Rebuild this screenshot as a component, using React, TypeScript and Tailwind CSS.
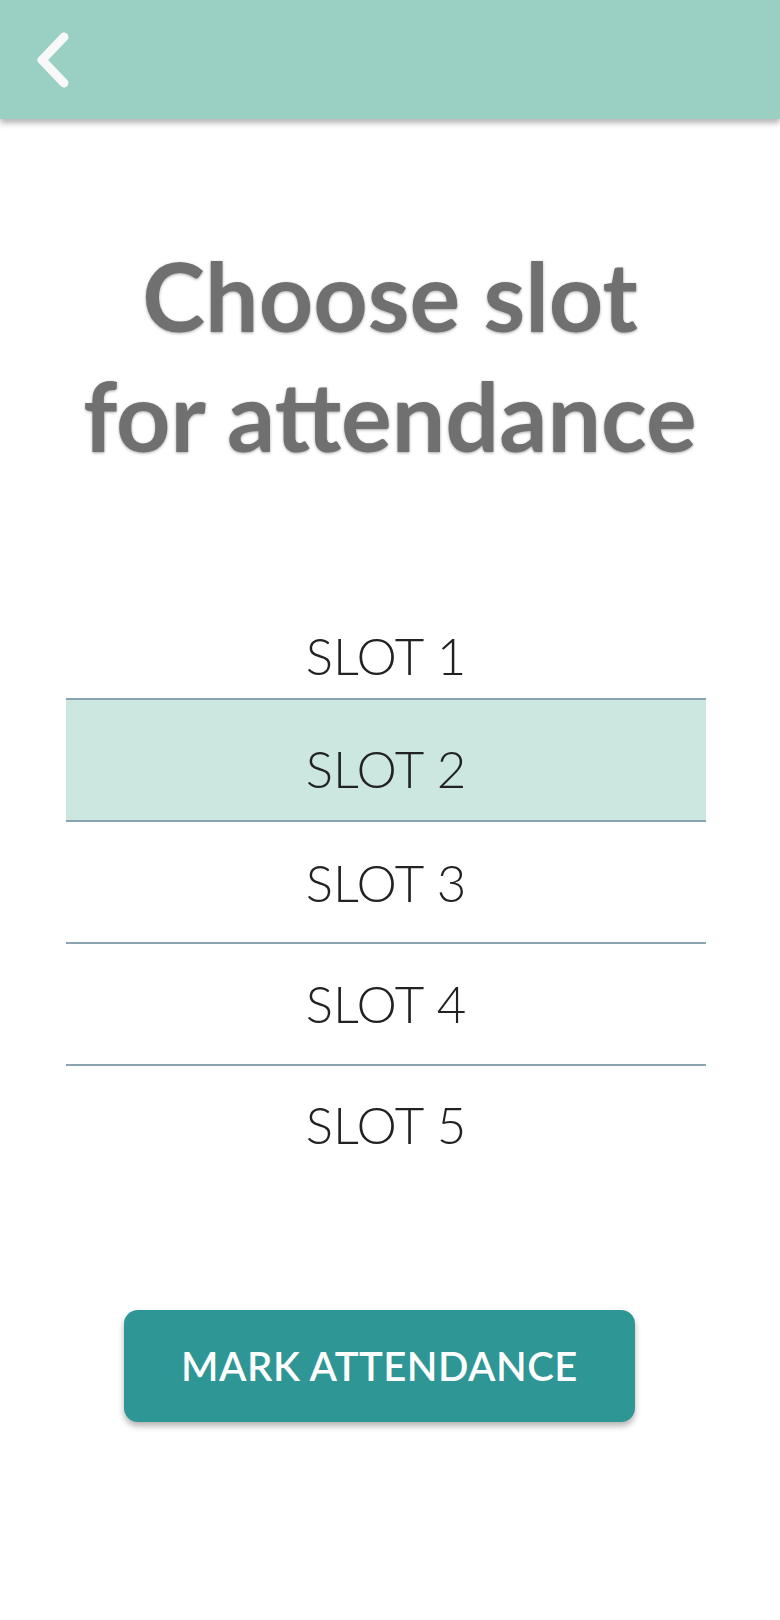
import React from "react";

const slots = [
  { label: "SLOT 1", pad: "pt-[36px]" },
  { label: "SLOT 2", pad: "pt-[19px]" },
  { label: "SLOT 3", pad: "pt-[2px]" },
  { label: "SLOT 4", pad: "pt-0" },
  { label: "SLOT 5", pad: "pb-[4px]" },
];

export default function App() {
  const selected = 1;
  return (
    <div className="w-[780px] min-h-[1620px] bg-white" style={{ fontFamily: "Lato, 'Noto Sans', sans-serif" }}>
      <header className="h-[119px] bg-[#9ad0c3] shadow-[0_4px_6px_rgba(0,0,0,0.3)] flex items-start pt-[30px] pl-[30px]">
        <svg width="44" height="60" viewBox="0 0 44 60">
          <path d="M34 7 L12 30 L34 53" fill="none" stroke="#f8f8f8" strokeWidth="9" strokeLinecap="round" strokeLinejoin="round" />
        </svg>
      </header>
      <h1 className="mt-[116px] text-center text-[95px] leading-[120px] font-bold text-[#707070] [text-shadow:0_1px_3px_rgba(0,0,0,0.35)]">
        Choose slot
        <br />
        for attendance
      </h1>
      <div className="mt-[103px] ml-[66px] w-[640px]">
        {slots.map((s, i) => (
          <div
            key={s.label}
            className={`h-[122px] flex items-center justify-center ${s.pad} text-[51px] font-light text-[#222] ${i < slots.length - 1 ? "border-b-2 border-[#8aa3b3]" : ""} ${i === selected ? "bg-[#cce7e0]" : ""}`}
          >
            {s.label}
          </div>
        ))}
      </div>
      <button className="mt-[122px] ml-[124px] w-[511px] h-[112px] rounded-[14px] bg-[#2e9694] text-white text-[40px] font-semibold shadow-[0_4px_6px_rgba(0,0,0,0.3)] tracking-[0.5px]">
        MARK ATTENDANCE
      </button>
    </div>
  );
}
